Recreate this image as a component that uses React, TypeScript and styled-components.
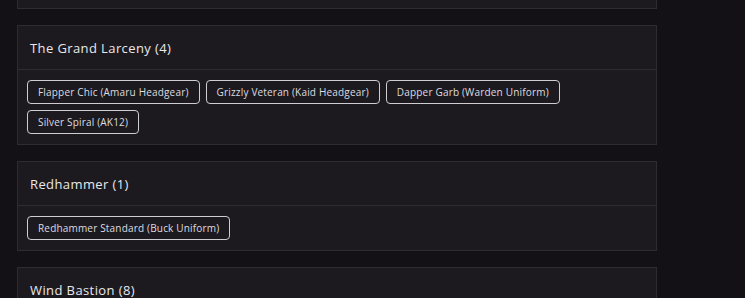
import React from "react";
import styled, { createGlobalStyle } from "styled-components";

const GlobalStyle = createGlobalStyle`
  html, body {
    margin: 0;
    background: #131115;
  }
  body {
    font-family: "Open Sans", "Liberation Sans", sans-serif;
    color: #e4e3e6;
    overflow: hidden;
  }
`;

const groups = [
  {
    title: "The Grand Larceny (4)",
    items: [
      "Flapper Chic (Amaru Headgear)",
      "Grizzly Veteran (Kaid Headgear)",
      "Dapper Garb (Warden Uniform)",
      "Silver Spiral (AK12)",
    ],
  },
  {
    title: "Redhammer (1)",
    items: ["Redhammer Standard (Buck Uniform)"],
  },
  {
    title: "Wind Bastion (8)",
    items: ["Desert Fox (Kaid Uniform)"],
  },
];

export default function App() {
  return (
    <>
      <GlobalStyle />
      <Page>
        <List>
          <Card $cut />
          {groups.map((g) => (
            <Card key={g.title}>
              <Header>{g.title}</Header>
              <Body>
                {g.items.map((item) => (
                  <Chip key={item}>{item}</Chip>
                ))}
              </Body>
            </Card>
          ))}
        </List>
      </Page>
    </>
  );
}

const Page = styled.div`
  padding-left: 17px;
  height: 298px;
  overflow: hidden;
`;

const List = styled.div`
  width: 640px;
  display: flex;
  flex-direction: column;
  gap: 16px;
`;

const Card = styled.section<{ $cut?: boolean }>`
  background: #1c1a1e;
  border: 1px solid #2e2c31;
  ${({ $cut }) => $cut && `height: 8px; border-top: none;`}
`;

const Header = styled.h3`
  margin: 0;
  height: 43px;
  padding: 0 12px;
  display: flex;
  align-items: center;
  font-size: 13px;
  font-weight: 500;
  letter-spacing: 0.4px;
  color: #e9e8eb;
  border-bottom: 1px solid #2e2c31;
`;

const Body = styled.div`
  display: flex;
  flex-wrap: wrap;
  gap: 6px;
  padding: 10px 9px;
`;

const Chip = styled.span`
  height: 22px;
  padding: 0 10px;
  display: inline-flex;
  align-items: center;
  border: 1px solid #cfcdd2;
  border-radius: 4px;
  font-size: 10px;
  letter-spacing: 0.18px;
  color: #dddce0;
  white-space: nowrap;
`;
